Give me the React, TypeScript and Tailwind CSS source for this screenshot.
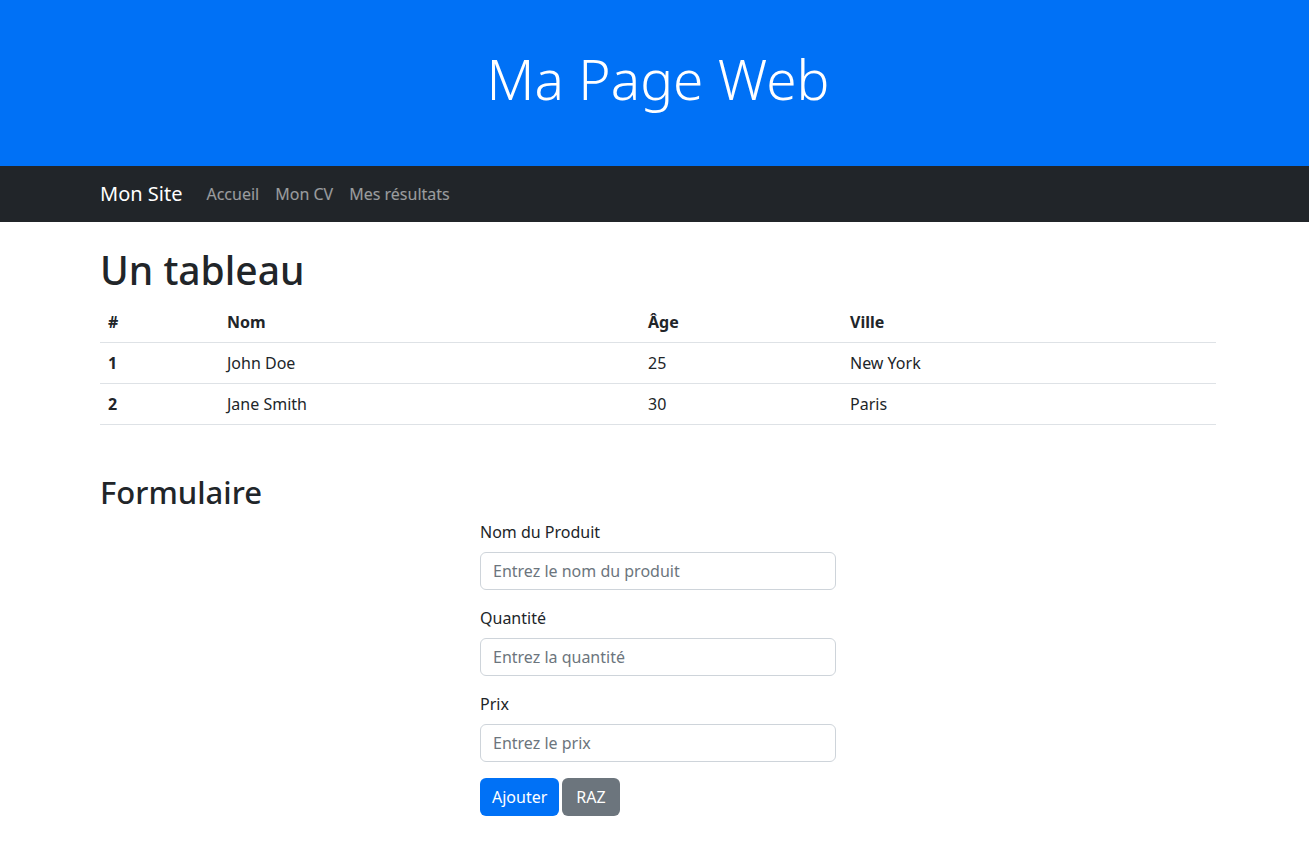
export default function App() {
  const rows = [
    { id: 1, nom: 'John Doe', age: 25, ville: 'New York' },
    { id: 2, nom: 'Jane Smith', age: 30, ville: 'Paris' },
  ]

  return (
    <div className="min-h-[849px] bg-white text-[#212529] text-base leading-6" style={{ fontFamily: '"Noto Sans", sans-serif' }}>
      {/* Header */}
      <header className="h-[166px] bg-[#0071f6] flex items-center justify-center pl-[7px]">
        <h1 className="text-[55px] font-light leading-[1.2] text-white -mt-2">Ma Page Web</h1>
      </header>

      {/* Navbar */}
      <nav className="h-14 bg-[#212529]">
        <div className="w-[1116px] ml-[100px] h-full flex items-center">
          <a className="text-xl text-white mr-4">Mon Site</a>
          <ul className="flex">
            <li><a className="px-2 text-white/55">Accueil</a></li>
            <li><a className="px-2 text-white/55">Mon CV</a></li>
            <li><a className="px-2 text-white/55">Mes résultats</a></li>
          </ul>
        </div>
      </nav>

      <main className="w-[1116px] ml-[100px]">
        <h1 className="mt-6 mb-2 text-[39px] font-medium leading-[48px]">Un tableau</h1>
        <table className="w-full mb-4 border-collapse">
          <thead>
            <tr className="border-b border-[#dee2e6]">
              <th className="w-[119px] p-2 text-left font-bold">#</th>
              <th className="w-[421px] p-2 text-left font-bold">Nom</th>
              <th className="w-[202px] p-2 text-left font-bold">Âge</th>
              <th className="p-2 text-left font-bold">Ville</th>
            </tr>
          </thead>
          <tbody>
            {rows.map((r) => (
              <tr key={r.id} className="border-b border-[#dee2e6]">
                <th className="p-2 text-left font-bold">{r.id}</th>
                <td className="p-2">{r.nom}</td>
                <td className="p-2">{r.age}</td>
                <td className="p-2">{r.ville}</td>
              </tr>
            ))}
          </tbody>
        </table>

        <h2 className="mt-12 mb-[9px] text-[31px] font-medium leading-[38px]">Formulaire</h2>
        <form className="ml-[380px] w-[356px]">
          <div className="mb-4">
            <label className="block mb-2">Nom du Produit</label>
            <input
              className="block w-full h-[38px] px-3 py-1.5 border border-[#ced4da] rounded-md placeholder:text-[#6c757d] outline-none"
              placeholder="Entrez le nom du produit"
            />
          </div>
          <div className="mb-4">
            <label className="block mb-2">Quantité</label>
            <input
              className="block w-full h-[38px] px-3 py-1.5 border border-[#ced4da] rounded-md placeholder:text-[#6c757d] outline-none"
              placeholder="Entrez la quantité"
            />
          </div>
          <div className="mb-4">
            <label className="block mb-2">Prix</label>
            <input
              className="block w-full h-[38px] px-3 py-1.5 border border-[#ced4da] rounded-md placeholder:text-[#6c757d] outline-none"
              placeholder="Entrez le prix"
            />
          </div>
          <div className="flex gap-[3px]">
            <button type="button" className="h-[38px] px-3 rounded-md bg-[#0071f6] text-white">Ajouter</button>
            <button type="button" className="h-[38px] px-[14px] rounded-md bg-[#6c757d] text-white">RAZ</button>
          </div>
        </form>
      </main>
    </div>
  )
}
